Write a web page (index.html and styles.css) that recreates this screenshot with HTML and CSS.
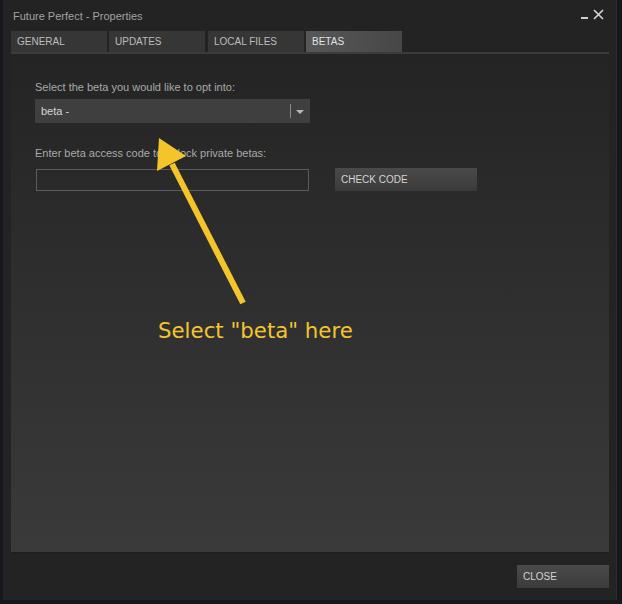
FILE: index.html
```html
<!DOCTYPE html>
<html lang="en">
<head>
    <meta charset="UTF-8">
    <title>Future Perfect - Properties</title>
    <link rel="stylesheet" href="styles.css">
</head>
<body>
    <div class="window">
        <!-- Barra del titolo -->
        <div class="titlebar">
            <span class="title">Future Perfect - Properties</span>
            <span class="controls">
                <span class="minimize"></span>
                <svg class="close-x" width="11" height="11" viewBox="0 0 11 11">
                    <path d="M1 1 L10 10 M10 1 L1 10" stroke="#d6d6d6" stroke-width="1.6"/>
                </svg>
            </span>
        </div>

        <!-- Schede -->
        <div class="tabs">
            <div class="tab">GENERAL</div>
            <div class="tab">UPDATES</div>
            <div class="tab">LOCAL FILES</div>
            <div class="tab active">BETAS</div>
        </div>

        <div class="panel">
            <div class="label">Select the beta you would like to opt into:</div>
            <div class="dropdown">
                <span class="dropdown-value">beta -</span>
                <span class="dropdown-sep"></span>
                <span class="dropdown-arrow"></span>
            </div>

            <div class="label second">Enter beta access code to unlock private betas:</div>
            <div class="code-row">
                <div class="code-input"></div>
                <button class="btn check">CHECK CODE</button>
            </div>

            <!-- Annotazione gialla sopra il contenuto -->
            <svg class="annotation" width="300" height="230" viewBox="0 0 300 230">
                <line x1="243" y1="302" x2="172" y2="163" stroke="#f4c52a" stroke-width="6" transform="translate(-140 -120)"/>
                <polygon points="159,137 186,155 157,170" fill="#f4c52a" transform="translate(-140 -120)"/>
            </svg>
            <div class="note">Select "beta" here</div>
        </div>

        <div class="footer">
            <button class="btn close">CLOSE</button>
        </div>
    </div>
</body>
</html>
```

FILE: styles.css
```css
/* Finestra delle proprietà stile Steam */
body {
    margin: 0;
    padding: 0;
    background-color: #15191d;
    font-family: "Liberation Sans", Arial, sans-serif;
    width: 622px;
    height: 604px;
    overflow: hidden;
}

.window {
    position: relative;
    margin-left: 3px;
    width: 614px;
    height: 600px;
    background-color: #232323;
    box-sizing: border-box;
    border-right: 1px solid #2c2c2c;
    display: flex;
    flex-direction: column;
}

.titlebar {
    height: 31px;
    display: flex;
    justify-content: space-between;
    align-items: center;
    padding: 0 12px 0 10px;
    box-sizing: border-box;
}

.title {
    color: #a2a2a2;
    font-size: 11px;
}

.controls {
    display: flex;
    align-items: center;
    gap: 5px;
    margin-top: -2px;
}

.minimize {
    width: 7px;
    height: 2px;
    background-color: #cfcfcf;
    margin-top: 6px;
}

.tabs {
    display: flex;
    gap: 2px;
    margin-left: 8px;
    height: 21px;
    width: 598px;
    border-bottom: 2px solid #3c3c3c;
}

.tab {
    width: 96px;
    background-color: #363636;
    color: #bdbdbd;
    font-size: 10px;
    padding: 5px 0 0 6px;
    box-sizing: border-box;
}

.tab:nth-child(3) {
    margin-left: 1px;
}

.tab.active {
    background: linear-gradient(to right, #575757, #474747);
    color: #e2e2e2;
}

.panel {
    position: relative;
    margin-left: 8px;
    width: 598px;
    height: 500px;
    background: linear-gradient(to bottom, #242424, #3a3a3a);
    border-bottom: 2px solid #1f1f1f;
    padding: 27px 0 0 24px;
    box-sizing: border-box;
}

.label {
    color: #a9a9a9;
    font-size: 11px;
    height: 18px;
}

.label.second {
    margin-top: 24px;
}

.dropdown {
    width: 275px;
    height: 24px;
    background-color: #3f3f3f;
    display: flex;
    align-items: center;
    box-sizing: border-box;
    padding-left: 6px;
}

.dropdown-value {
    flex: 1;
    color: #d6d6d6;
    font-size: 11px;
}

.dropdown-sep {
    width: 1px;
    height: 14px;
    background-color: #8a8a8a;
}

.dropdown-arrow {
    width: 0;
    height: 0;
    border-left: 4px solid transparent;
    border-right: 4px solid transparent;
    border-top: 4px solid #b8b8b8;
    margin: 2px 6px 0 5px;
}

.code-row {
    display: flex;
    align-items: center;
    margin-top: 3px;
}

.code-input {
    width: 273px;
    height: 22px;
    border: 1px solid #5b5b5b;
    box-sizing: border-box;
    margin-left: 1px;
}

.btn {
    border: none;
    font-family: "Liberation Sans", Arial, sans-serif;
    font-size: 10px;
    color: #d4d4d4;
    text-align: left;
    padding: 0 0 0 6px;
    background: linear-gradient(to bottom, #4a4a4a, #3b3b3b);
    height: 23px;
}

.btn.check {
    width: 142px;
    margin-left: 26px;
}

.annotation {
    position: absolute;
    left: 129px;
    top: 67px;
}

.note {
    position: absolute;
    left: 147px;
    top: 264px;
    color: #f2c531;
    font-family: "DejaVu Sans", sans-serif;
    font-size: 21.3px;
}

.footer {
    flex: 1;
    display: flex;
    justify-content: flex-end;
    align-items: flex-start;
    padding: 11px 7px 0 0;
}

.btn.close {
    width: 92px;
}
```
